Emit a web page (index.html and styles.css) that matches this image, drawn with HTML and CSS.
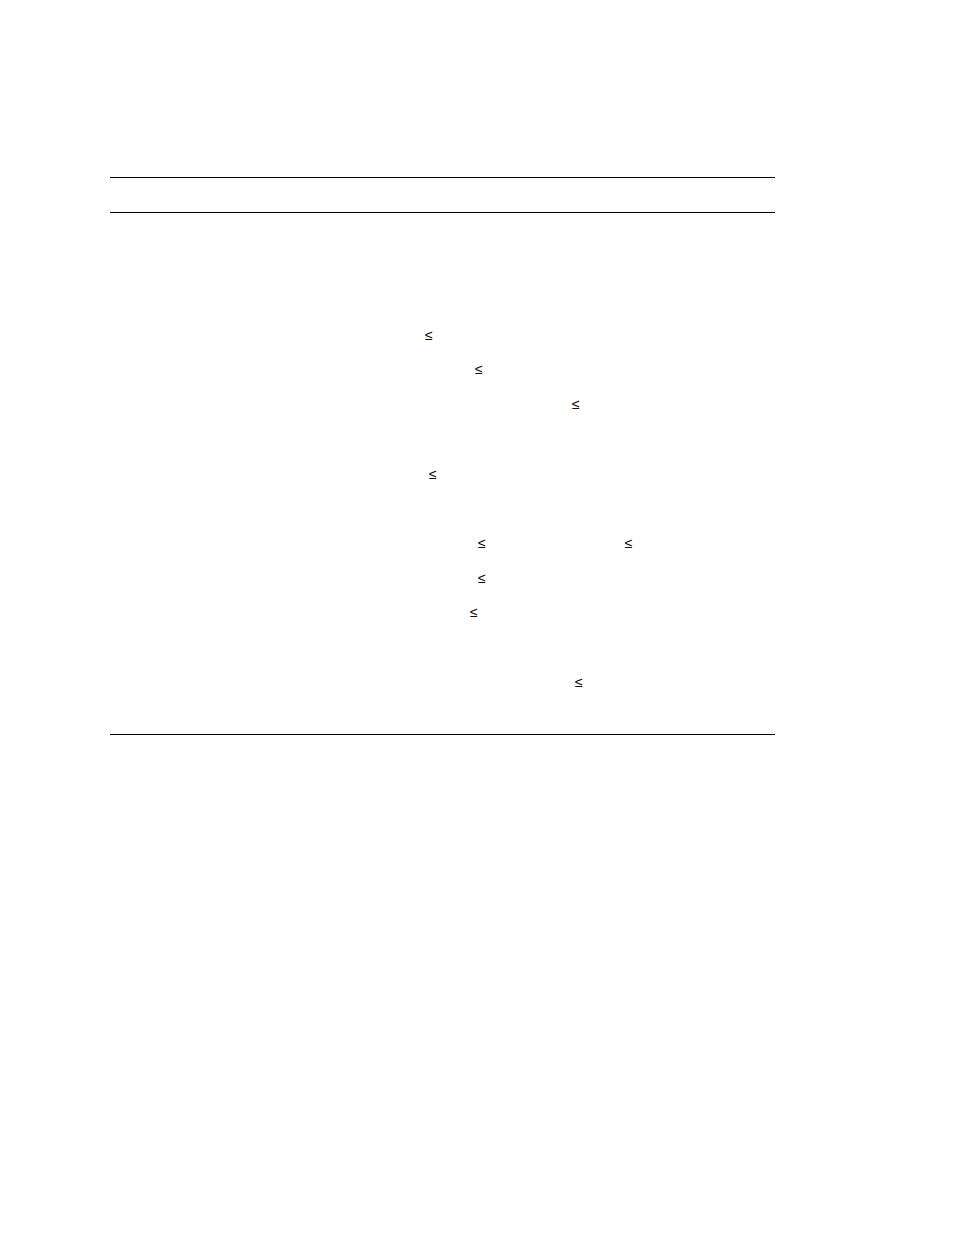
FILE: index.html
```html
<!DOCTYPE html>
<html>
<head>
<meta charset="utf-8">
<link rel="stylesheet" href="styles.css">
</head>
<body>
<div class="page">
  <div class="table">
    <div class="head"></div>
    <div class="body">
      <div class="row"></div>
      <div class="row"></div>
      <div class="row"></div>
      <div class="row"><span class="sym" style="margin-left:315px">≤</span></div>
      <div class="row"><span class="sym" style="margin-left:365px">≤</span></div>
      <div class="row"><span class="sym" style="margin-left:462px">≤</span></div>
      <div class="row"></div>
      <div class="row"><span class="sym" style="margin-left:319px">≤</span></div>
      <div class="row"></div>
      <div class="row"><span class="sym" style="margin-left:368px">≤</span><span class="sym" style="margin-left:139px">≤</span></div>
      <div class="row"><span class="sym" style="margin-left:368px">≤</span></div>
      <div class="row"><span class="sym" style="margin-left:360px">≤</span></div>
      <div class="row"></div>
      <div class="row"><span class="sym" style="margin-left:465px">≤</span></div>
      <div class="row"></div>
    </div>
  </div>
</div>
</body>
</html>
```

FILE: styles.css
```css
html, body {
  margin: 0;
  padding: 0;
  background: #fff;
}
body {
  font-family: "Liberation Sans", sans-serif;
  font-size: 14px;
  color: #000;
}
.page {
  padding: 177px 0 0 110px;
}
.table {
  width: 665px;
}
.head {
  height: 34px;
  border-top: 1px solid #000;
  border-bottom: 1px solid #000;
}
.body {
  height: 521px;
  border-bottom: 1px solid #000;
  display: flex;
  flex-direction: column;
}
.row {
  flex: 1 1 0;
  display: flex;
  align-items: center;
}
.sym {
  display: inline-block;
  line-height: 1;
  color: #111;
}
```
